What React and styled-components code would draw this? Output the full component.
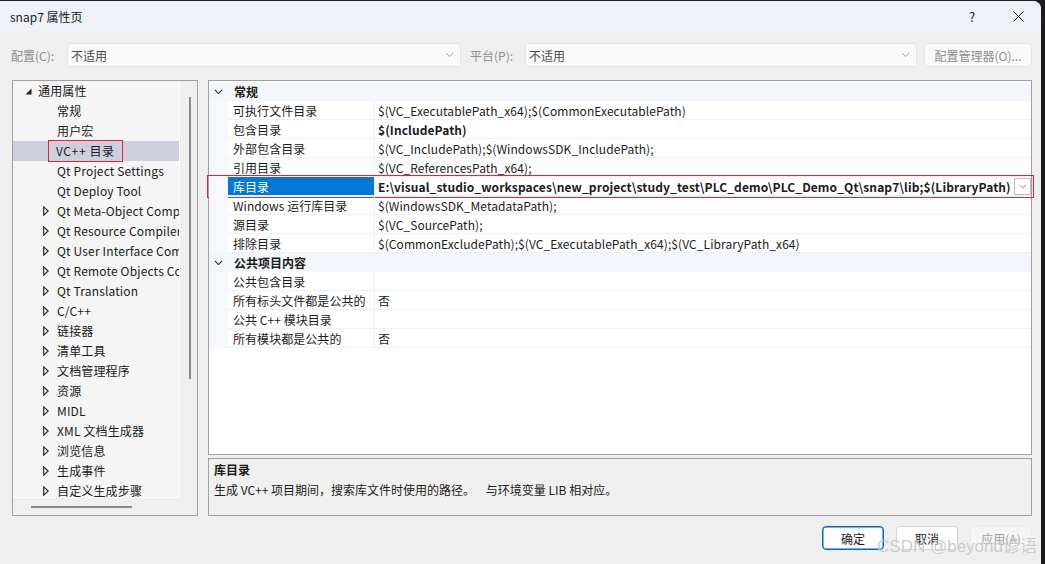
import React from "react";
import styled, { createGlobalStyle } from "styled-components";

const FONT = `"Noto Sans CJK SC", "Noto Sans", sans-serif`;

const GlobalStyle = createGlobalStyle`
  html, body {
    margin: 0;
    padding: 0;
    background: #1d1d1f;
  }
  body {
    font-family: ${FONT};
    font-size: 12px;
    color: #1b1b1b;
  }
  * { box-sizing: border-box; }
`;

const Window = styled.div`
  position: relative;
  width: 1041px;
  height: 563px;
  margin-top: 1px;
  background: #efefef;
  border-top-right-radius: 8px;
  overflow: hidden;
  display: flex;
  flex-direction: column;
`;

const TitleBar = styled.div`
  height: 30px;
  flex: none;
  background: #eef2f8;
  display: flex;
  align-items: center;
  padding: 0 0 0 10px;
`;

const Title = styled.div`
  flex: 1;
  font-size: 12px;
  color: #1a1a1a;
`;

const CaptionButton = styled.div`
  width: 46px;
  height: 30px;
  display: flex;
  align-items: center;
  justify-content: center;
  font-size: 13px;
  color: #1a1a1a;
  margin-right: ${(p) => p.$mr || 0}px;
`;

const Toolbar = styled.div`
  display: flex;
  align-items: center;
  height: 24px;
  margin: 12px 9px 0 11px;
  flex: none;
`;

const ToolLabel = styled.div`
  color: #8d8d8d;
  width: ${(p) => p.$w}px;
  flex: none;
`;

const SelectBox = styled.div`
  width: ${(p) => p.$w}px;
  height: 24px;
  flex: none;
  background: #f9f9f9;
  border: 1px solid #e6e6e6;
  border-radius: 3px;
  display: flex;
  align-items: center;
  padding: 0 6px 0 3px;
  color: #4a4a4a;
  margin-right: ${(p) => p.$mr || 0}px;
`;

const SelectText = styled.div`
  flex: 1;
`;

const ToolButton = styled.div`
  width: 108px;
  height: 24px;
  flex: none;
  margin-left: auto;
  background: #f9f9f9;
  border: 1px solid #e6e6e6;
  border-radius: 4px;
  display: flex;
  align-items: center;
  justify-content: center;
  color: #8d8d8d;
`;

const Main = styled.div`
  display: flex;
  gap: 10px;
  height: 436px;
  margin: 13px 9px 0 12px;
  flex: none;
`;

/* ---------- left tree ---------- */

const TreePanel = styled.div`
  width: 186px;
  flex: none;
  border: 1px solid #a0a0a0;
  display: grid;
  grid-template-columns: 1fr 17px;
  grid-template-rows: 1fr 17px;
  background: #efefef;
`;

const TreeArea = styled.div`
  background: #f5f5f5;
  border-right: 1px solid #ffffff;
  border-bottom: 1px solid #ffffff;
  overflow: hidden;
  letter-spacing: 0.15px;
`;

const TreeRow = styled.div`
  height: 20px;
  display: flex;
  align-items: center;
  padding-left: ${(p) => (p.$level === 0 ? 8 : 27)}px;
  background: ${(p) => (p.$selected ? "#cdd0dc" : "transparent")};
  white-space: nowrap;
`;

const ArrowSlot = styled.div`
  width: 17px;
  flex: none;
  display: flex;
  align-items: center;
  padding-left: ${(p) => (p.$level === 0 ? 4 : 3)}px;
`;

const TreeLabel = styled.span`
  line-height: 20px;
  ${(p) =>
    p.$marked &&
    `
    padding: 0 7px 0 7px;
    margin-left: -8px;
    letter-spacing: 0.6px;
    box-shadow: 0 0 0 1px #e0262b;
  `}
`;

const VScroll = styled.div`
  display: flex;
  justify-content: center;
  padding-top: 16px;
`;

const VThumb = styled.div`
  width: 2px;
  height: 282px;
  background: #8a8a8a;
  margin-left: 2px;
`;

const HScroll = styled.div`
  display: flex;
  align-items: center;
  padding-left: 18px;
`;

const HThumb = styled.div`
  width: 101px;
  height: 2px;
  background: #8a8a8a;
  margin-top: 1px;
`;

const Corner = styled.div``;

/* ---------- right side ---------- */

const RightCol = styled.div`
  width: 824px;
  flex: none;
  display: flex;
  flex-direction: column;
  gap: 3px;
`;

const Grid = styled.div`
  height: 375px;
  flex: none;
  background: #ffffff;
  border: 1px solid #a0a0a0;
  padding-top: 1px;
`;

const CategoryRow = styled.div`
  height: 19px;
  display: grid;
  grid-template-columns: 19px 1fr;
  align-items: center;
  background: #f3f6fb;
`;

const CategoryToggle = styled.div`
  display: flex;
  align-items: center;
  justify-content: center;
`;

const CategoryText = styled.div`
  font-weight: bold;
  padding-left: 6px;
`;

const PropRow = styled.div`
  position: relative;
  height: 19px;
  display: grid;
  grid-template-columns: 19px 147px 1fr;
  ${(p) =>
    p.$marked &&
    `
    &::after {
      content: "";
      position: absolute;
      left: -2px;
      right: -3px;
      top: -2px;
      bottom: -2px;
      border: 1px solid #e0262b;
      pointer-events: none;
    }
  `}
`;

const Margin = styled.div`
  background: #f6f8fc;
`;

const NameCell = styled.div`
  display: flex;
  align-items: center;
  padding-left: 5px;
  border-bottom: 1px solid #eef0f3;
  border-right: 1px solid #eef0f3;
  background: ${(p) => (p.$selected ? "#0078d7" : "transparent")};
  color: ${(p) => (p.$selected ? "#ffffff" : "#1b1b1b")};
  white-space: nowrap;
  overflow: hidden;
  letter-spacing: 0.05px;
`;

const ValueCell = styled.div`
  display: flex;
  align-items: center;
  padding-left: 3px;
  border-bottom: 1px solid #eef0f3;
  font-weight: ${(p) => (p.$bold ? "bold" : "normal")};
  letter-spacing: ${(p) => (p.$bold ? 0.1 : 0.07)}px;
  white-space: nowrap;
  overflow: hidden;
`;

const ValueText = styled.div`
  flex: 1;
  overflow: hidden;
`;

const DropButton = styled.div`
  width: 17px;
  height: 17px;
  flex: none;
  border: 1px solid #bdbdbd;
  background: #ffffff;
  display: flex;
  align-items: center;
  justify-content: center;
`;

const Description = styled.div`
  height: 58px;
  flex: none;
  border: 1px solid #a0a0a0;
  background: #f0f0f0;
  padding: 1px 5px 0;
  line-height: 20px;
`;

const DescTitle = styled.div`
  font-weight: bold;
`;

const DescText = styled.div`
  white-space: pre;
`;

const Footer = styled.div`
  display: flex;
  justify-content: flex-end;
  gap: 12px;
  margin: 10px 9px 0 0;
  flex: none;
`;

const DialogButton = styled.div`
  width: 62px;
  height: 24px;
  border-radius: 4px;
  display: flex;
  align-items: center;
  justify-content: center;
  background: ${(p) => (p.$disabled ? "#f5f5f5" : "#fdfdfd")};
  color: ${(p) => (p.$disabled ? "#a3a3a3" : "#1b1b1b")};
  border: 1px solid ${(p) => (p.$primary ? "#0067c0" : p.$disabled ? "#ebebeb" : "#d6d6d6")};
  box-shadow: ${(p) => (p.$primary ? "inset 0 0 0 0.5px #0067c0" : "none")};
`;

const Watermark = styled.div`
  position: absolute;
  right: 4px;
  bottom: 7px;
  font-family: "Liberation Sans", "Noto Sans CJK SC", sans-serif;
  font-size: 17px;
  color: rgba(160, 160, 160, 0.55);
  text-shadow: 0 0 1px rgba(255, 255, 255, 0.8);
  pointer-events: none;
`;

/* ---------- icons ---------- */

const Chevron = ({ size = 9, color = "#9a9a9a", stroke = 1 }) => (
  <svg width={size} height={size / 2 + 1} viewBox="0 0 10 6">
    <polyline points="1,1 5,5 9,1" fill="none" stroke={color} strokeWidth={stroke} />
  </svg>
);

const OpenArrow = () => (
  <svg width="7" height="7" viewBox="0 0 7 7">
    <polygon points="6.5,0.5 6.5,6.5 0.5,6.5" fill="#222" />
  </svg>
);

const ClosedArrow = () => (
  <svg width="6" height="10" viewBox="0 0 6 10">
    <polygon points="0.7,0.8 5.2,5 0.7,9.2" fill="none" stroke="#222" strokeWidth="1.1" />
  </svg>
);

const CloseIcon = () => (
  <svg width="11" height="11" viewBox="0 0 11 11">
    <path d="M0.5 0.5 L10.5 10.5 M10.5 0.5 L0.5 10.5" stroke="#1a1a1a" strokeWidth="1" />
  </svg>
);

/* ---------- data ---------- */

const treeItems = [
  { label: "通用属性", level: 0, arrow: "open" },
  { label: "常规", level: 1 },
  { label: "用户宏", level: 1 },
  { label: "VC++ 目录", level: 1, selected: true, marked: true },
  { label: "Qt Project Settings", level: 1 },
  { label: "Qt Deploy Tool", level: 1 },
  { label: "Qt Meta-Object Compiler", level: 1, arrow: "closed" },
  { label: "Qt Resource Compiler", level: 1, arrow: "closed" },
  { label: "Qt User Interface Compiler", level: 1, arrow: "closed" },
  { label: "Qt Remote Objects Compiler", level: 1, arrow: "closed" },
  { label: "Qt Translation", level: 1, arrow: "closed" },
  { label: "C/C++", level: 1, arrow: "closed" },
  { label: "链接器", level: 1, arrow: "closed" },
  { label: "清单工具", level: 1, arrow: "closed" },
  { label: "文档管理程序", level: 1, arrow: "closed" },
  { label: "资源", level: 1, arrow: "closed" },
  { label: "MIDL", level: 1, arrow: "closed" },
  { label: "XML 文档生成器", level: 1, arrow: "closed" },
  { label: "浏览信息", level: 1, arrow: "closed" },
  { label: "生成事件", level: 1, arrow: "closed" },
  { label: "自定义生成步骤", level: 1, arrow: "closed" },
];

const groups = [
  {
    title: "常规",
    rows: [
      { name: "可执行文件目录", value: "$(VC_ExecutablePath_x64);$(CommonExecutablePath)" },
      { name: "包含目录", value: "$(IncludePath)", bold: true },
      { name: "外部包含目录", value: "$(VC_IncludePath);$(WindowsSDK_IncludePath);" },
      { name: "引用目录", value: "$(VC_ReferencesPath_x64);" },
      {
        name: "库目录",
        value:
          "E:\\visual_studio_workspaces\\new_project\\study_test\\PLC_demo\\PLC_Demo_Qt\\snap7\\lib;$(LibraryPath)",
        bold: true,
        selected: true,
      },
      { name: "Windows 运行库目录", value: "$(WindowsSDK_MetadataPath);" },
      { name: "源目录", value: "$(VC_SourcePath);" },
      { name: "排除目录", value: "$(CommonExcludePath);$(VC_ExecutablePath_x64);$(VC_LibraryPath_x64)" },
    ],
  },
  {
    title: "公共项目内容",
    rows: [
      { name: "公共包含目录", value: "" },
      { name: "所有标头文件都是公共的", value: "否" },
      { name: "公共 C++ 模块目录", value: "" },
      { name: "所有模块都是公共的", value: "否" },
    ],
  },
];

export default function App() {
  return (
    <>
      <GlobalStyle />
      <Window>
        <TitleBar>
          <Title>snap7 属性页</Title>
          <CaptionButton $mr={0}>?</CaptionButton>
          <CaptionButton $mr={0}>
            <CloseIcon />
          </CaptionButton>
        </TitleBar>

        <Toolbar>
          <ToolLabel $w={56}>配置(C):</ToolLabel>
          <SelectBox $w={394} $mr={9}>
            <SelectText>不适用</SelectText>
            <Chevron />
          </SelectBox>
          <ToolLabel $w={55}>平台(P):</ToolLabel>
          <SelectBox $w={392}>
            <SelectText>不适用</SelectText>
            <Chevron />
          </SelectBox>
          <ToolButton>配置管理器(O)...</ToolButton>
        </Toolbar>

        <Main>
          <TreePanel>
            <TreeArea>
              {treeItems.map((item) => (
                <TreeRow key={item.label} $level={item.level} $selected={item.selected}>
                  <ArrowSlot $level={item.level}>
                    {item.arrow === "open" && <OpenArrow />}
                    {item.arrow === "closed" && <ClosedArrow />}
                  </ArrowSlot>
                  <TreeLabel $marked={item.marked}>{item.label}</TreeLabel>
                </TreeRow>
              ))}
            </TreeArea>
            <VScroll>
              <VThumb />
            </VScroll>
            <HScroll>
              <HThumb />
            </HScroll>
            <Corner />
          </TreePanel>

          <RightCol>
            <Grid>
              {groups.map((g) => (
                <React.Fragment key={g.title}>
                  <CategoryRow>
                    <CategoryToggle>
                      <Chevron size={9} color="#333" stroke={1.3} />
                    </CategoryToggle>
                    <CategoryText>{g.title}</CategoryText>
                  </CategoryRow>
                  {g.rows.map((r) => (
                    <PropRow key={r.name} $marked={r.selected}>
                      <Margin />
                      <NameCell $selected={r.selected}>{r.name}</NameCell>
                      <ValueCell $bold={r.bold}>
                        <ValueText>{r.value}</ValueText>
                        {r.selected && (
                          <DropButton>
                            <Chevron size={8} color="#777" />
                          </DropButton>
                        )}
                      </ValueCell>
                    </PropRow>
                  ))}
                </React.Fragment>
              ))}
            </Grid>
            <Description>
              <DescTitle>库目录</DescTitle>
              <DescText>生成 VC++ 项目期间，搜索库文件时使用的路径。    与环境变量 LIB 相对应。</DescText>
            </Description>
          </RightCol>
        </Main>

        <Footer>
          <DialogButton $primary>确定</DialogButton>
          <DialogButton>取消</DialogButton>
          <DialogButton $disabled>应用(A)</DialogButton>
        </Footer>

        <Watermark>CSDN @beyond谚语</Watermark>
      </Window>
    </>
  );
}
